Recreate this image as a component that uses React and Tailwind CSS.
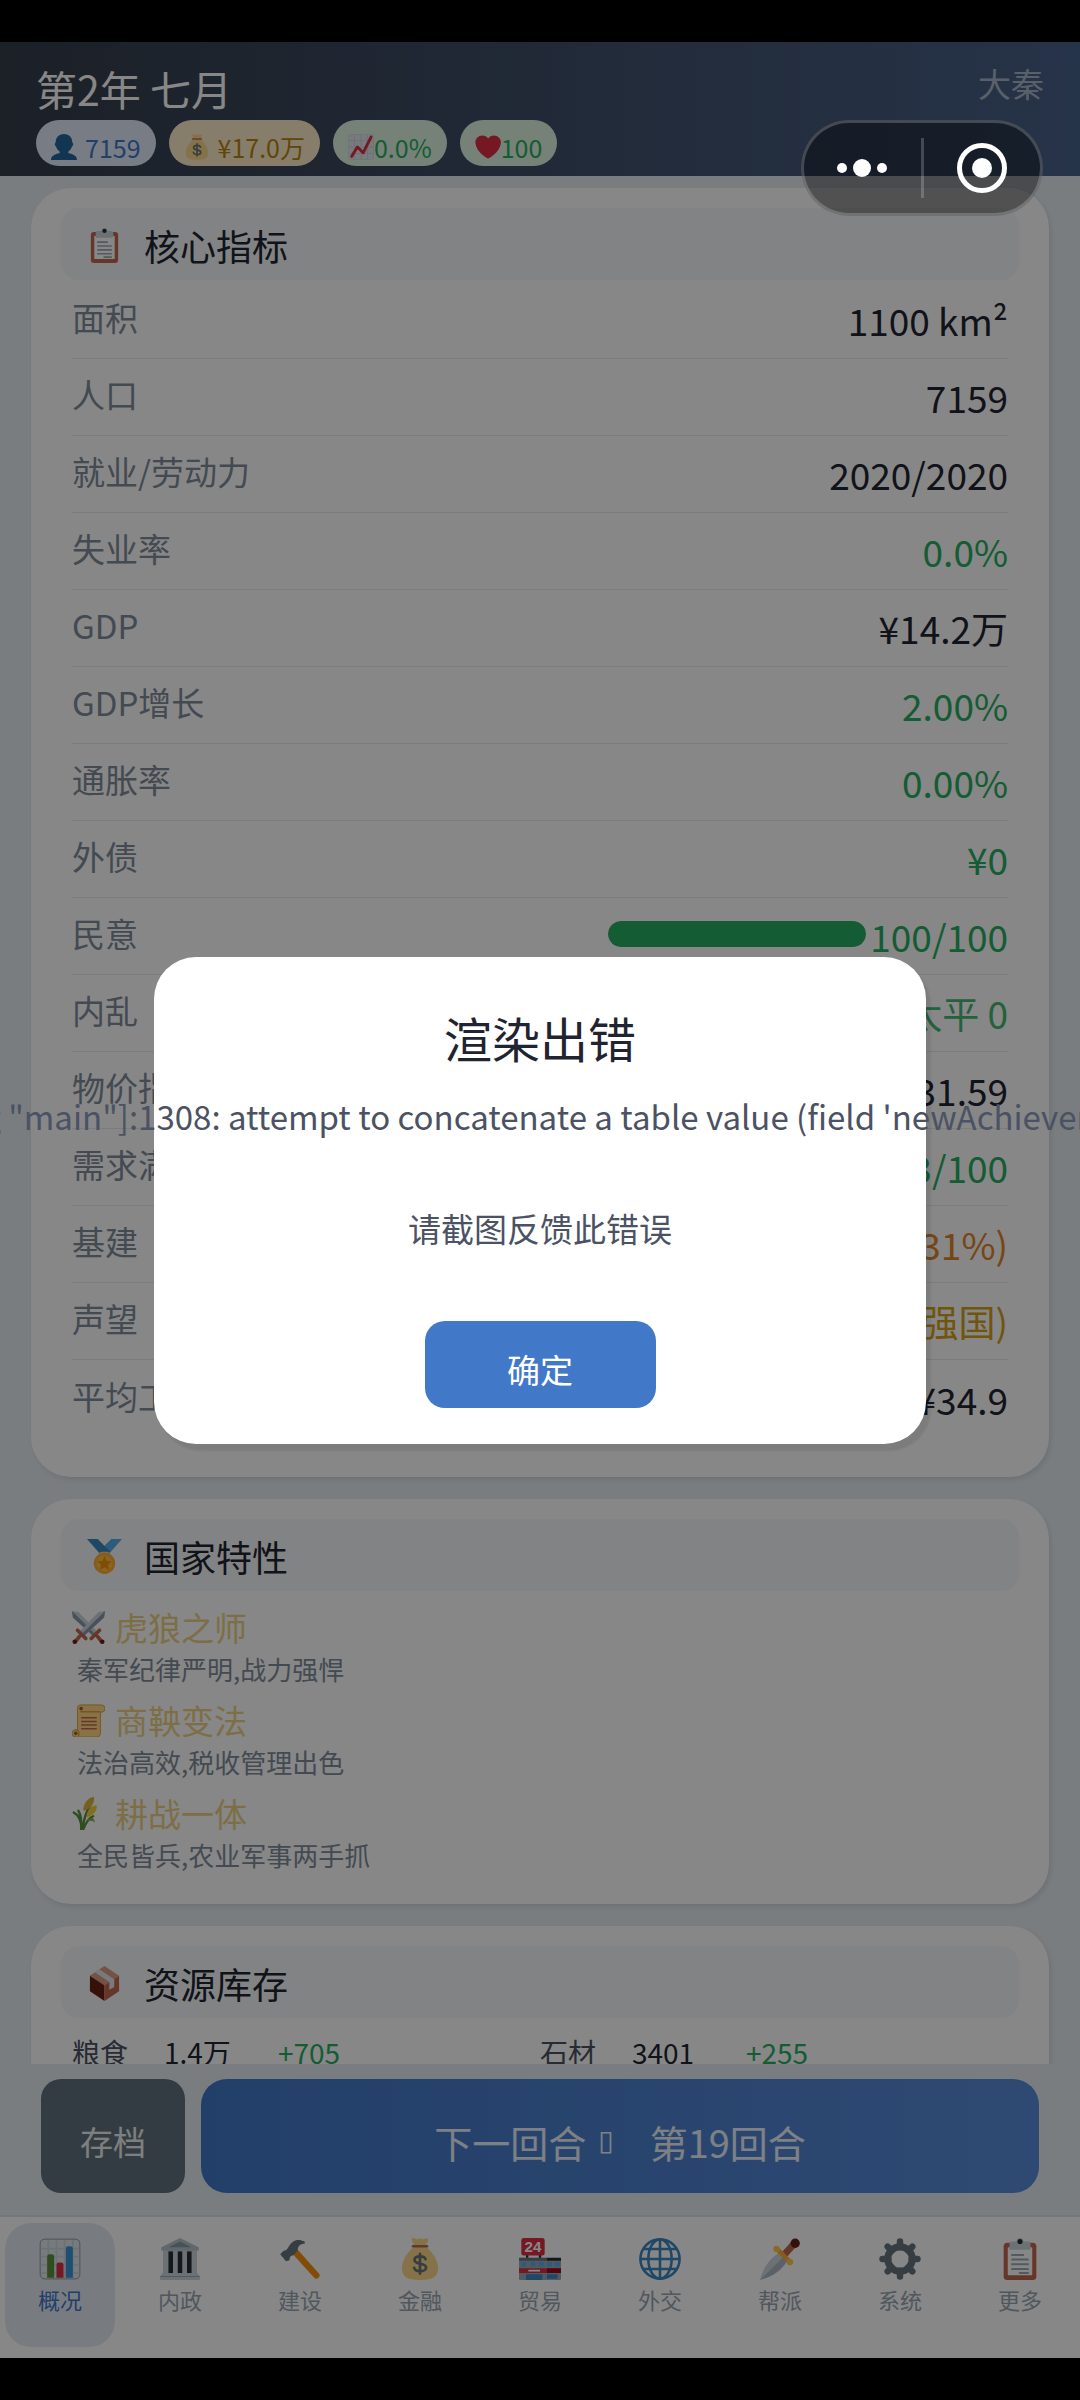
import { useState } from "react";

const ClipboardIcon = ({ className }) => (
  <svg viewBox="0 0 36 36" className={className} aria-hidden="true">
    <rect x="4" y="4" width="28" height="32" rx="3" fill="#C1694F" />
    <rect x="7.5" y="8" width="21" height="24" rx="1" fill="#FFF" />
    <path d="M25 3h-4a3 3 0 0 0-6 0h-4a2 2 0 0 0-2 2v5h18V5a2 2 0 0 0-2-2z" fill="#CCD6DD" />
    <circle cx="18" cy="3" r="2.2" fill="#292F33" />
    <path d="M10.500 14.500h11M10.500 18.500h15M10.500 22.500h15M10.500 26.500h15M17 30h8.500" stroke="#99AAB5" strokeWidth="1.700" />
  </svg>
);

const PersonIcon = ({ className }) => (
  <svg viewBox="0 0 36 36" className={className} aria-hidden="true">
    <path
      d="M24 26.800v-2.700c2.600-1.600 4.400-4.300 5.200-7.200.8-.2 1.500-1.300 1.500-2.600 0-1.200-.5-2.200-1.200-2.500C29.500 5 25.500 0 18 0S6.500 5 6.500 11.800c-.7.300-1.200 1.300-1.200 2.500 0 1.300.7 2.400 1.500 2.600.8 2.900 2.600 5.600 5.200 7.200v2.700C5 28 0 30.500 0 36h36c0-5.500-5-8-12-9.200z"
      fill="#226699"
    />
  </svg>
);

const MoneyBagIcon = ({ className }) => (
  <svg viewBox="0 0 36 36" className={className} aria-hidden="true">
    <path
      d="M23 7.500H13C8 11 2.500 19 2.500 26c0 7 4 10 15.500 10s15.500-3 15.500-10c0-7-5.500-15-10.500-18.500z"
      fill="#FDD888"
    />
    <path d="M11 1.500c0-2 2-1.500 3.500-.7C16 1.500 16.500.5 18 .5s2 1 3.500.3C23 0 25 0 25 1.500c0 2-1.500 3-2 5H13c-.5-2-2-3-2-5z" fill="#FDD888" />
    <path d="M12 7h12" stroke="#BF6952" strokeWidth="2.200" strokeLinecap="round" />
    <path
      d="M18 13.500v17M22.800 18.200c-.5-1.600-2.300-2.500-4.700-2.500-2.800 0-4.800 1.200-4.800 3.200 0 4.300 9.900 2 9.900 6.300 0 2-2.100 3.300-5 3.300s-4.700-1-5.200-3"
      fill="none"
      stroke="#67757F"
      strokeWidth="2.300"
      strokeLinecap="round"
    />
  </svg>
);

const TrendIcon = ({ className }) => (
  <svg viewBox="0 0 36 36" className={className} aria-hidden="true">
    <rect x=".5" y=".5" width="35" height="35" rx="4" fill="#E1E8ED" stroke="#CCD6DD" />
    <path d="M9 1v34M18 1v34M27 1v34M1 9h34M1 18h34M1 27h34" stroke="#CCD6DD" strokeWidth="1.500" />
    <path d="M5 31l8-13 8 8L32 4" fill="none" stroke="#DD2E44" strokeWidth="4" strokeLinecap="round" strokeLinejoin="round" />
  </svg>
);

const HeartIcon = ({ className }) => (
  <svg viewBox="0 0 36 36" className={className} aria-hidden="true">
    <path
      d="M35.900 11.800c0-5.300-4.300-9.700-9.700-9.700-3.300 0-6.200 1.700-8 4.200-1.700-2.500-4.600-4.200-8-4.200-5.300 0-9.700 4.300-9.700 9.700 0 .8.100 1.500.3 2.200C2.200 23.500 12.600 32 18.200 34c5.500-2 15.900-10.500 17.400-20 .2-.7.300-1.500.3-2.200z"
      fill="#DD2E44"
    />
  </svg>
);

const MedalIcon = ({ className }) => (
  <svg viewBox="0 0 36 36" className={className} aria-hidden="true">
    <path d="M25 0l-8 8-2 4 7 4L36 0z" fill="#55ACEE" />
    <path d="M11 0h-11l14 16h6l4-3z" fill="#3B88C3" />
    <rect x="13" y="13" width="10" height="4" rx="2" fill="#FFD983" />
    <circle cx="18" cy="25" r="11" fill="#FFAC33" />
    <circle cx="18" cy="25" r="8.300" fill="#FFCC4D" opacity=".6" />
    <path d="M18 17.500l2.200 5 5.300.5-4 3.500 1.200 5.300L18 29l-4.700 2.800 1.200-5.300-4-3.500 5.300-.5z" fill="#F4900C" />
  </svg>
);

const SwordsIcon = ({ className }) => (
  <svg viewBox="0 0 36 36" className={className} aria-hidden="true">
    <path d="M0 0l7 1 22 23-5 4L1 7z" fill="#CCD6DD" />
    <path d="M0 0l26 26-2 2L1 7z" fill="#8899A6" />
    <path d="M36 0l-7 1L7 24l5 4L35 7z" fill="#CCD6DD" />
    <path d="M36 0L10 26l2 2L35 7z" fill="#8899A6" />
    <path d="M21 30l9-9M28 28l4 5M15 30L6 21M8 28l-4 5" stroke="#C1694F" strokeWidth="4" strokeLinecap="round" />
    <circle cx="3" cy="33.500" r="2.500" fill="#662113" />
    <circle cx="33" cy="33.500" r="2.500" fill="#662113" />
  </svg>
);

const ScrollIcon = ({ className }) => (
  <svg viewBox="0 0 36 36" className={className} aria-hidden="true">
    <path d="M9 1h23a4 4 0 0 1 0 8h-1v23a4 4 0 0 1-4 4H4a4 4 0 1 1 0-8h2V4a3 3 0 0 1 3-3z" fill="#FFD983" stroke="#E39F3D" />
    <path d="M9 8.500h22M4 28.500c4 0 4 3.500 3 6.500" fill="none" stroke="#E39F3D" strokeWidth="1.500" />
    <circle cx="10" cy="5" r="2" fill="#99623A" />
    <circle cx="4" cy="32" r="2" fill="#99623A" />
    <path d="M10 15h17M10 19h17M10 23h17M10 27h17" stroke="#C1694F" strokeWidth="1.700" />
  </svg>
);

const GrainIcon = ({ className }) => (
  <svg viewBox="0 0 36 36" className={className} aria-hidden="true">
    <path d="M11 36c-1-10-4-17-9-19M11 36C13 24 15 16 20 9M12 36c3-8 6-13 11-15M10 35C10 24 10 20 7 15" fill="none" stroke="#5C913B" strokeWidth="2.600" strokeLinecap="round" />
    <path d="M12 14C13 6 18 0 24 0c1 6-3 12-10 15z" fill="#D8B83B" />
    <path d="M16 20c1-7 6-11 11-11 1 6-4 11-10 13z" fill="#F4D23C" />
    <path d="M17 25c4-3 7-3 8 3-3-3-6-2-8-1z" fill="#77B255" />
  </svg>
);

const BoxIcon = ({ className }) => (
  <svg viewBox="0 0 36 36" className={className} aria-hidden="true">
    <path d="M3 10v16l15 10V19z" fill="#662113" />
    <path d="M33 10v16L18 36V19z" fill="#C1694F" />
    <path d="M18 0L3 10l15 10 15-10z" fill="#D99E82" />
    <path d="M8 6.500l15 10v8l5-3v-8L13 3.500z" fill="#E6E7E8" />
  </svg>
);

const ChartIcon = ({ className }) => (
  <svg viewBox="0 0 36 36" className={className} aria-hidden="true">
    <rect x="1" y="1" width="34" height="34" rx="4" fill="#E1E8ED" stroke="#99AAB5" />
    <path d="M8 2v32M15 2v32M22 2v32M29 2v32M2 9h32M2 16h32M2 23h32M2 30h32" stroke="#CCD6DD" strokeWidth="1.500" />
    <path d="M7 34V16a2 2 0 0 1 2-2h2a2 2 0 0 1 2 2v18z" fill="#5C913B" />
    <path d="M15 34V23a2 2 0 0 1 2-2h2a2 2 0 0 1 2 2v11z" fill="#DD2E44" />
    <path d="M23 34V9a2 2 0 0 1 2-2h2a2 2 0 0 1 2 2v25z" fill="#3B94D9" />
  </svg>
);

const BuildingIcon = ({ className }) => (
  <svg viewBox="0 0 36 36" className={className} aria-hidden="true">
    <path d="M4 11h28v20H4z" fill="#66757F" />
    <path d="M8 12h4v18H8zM16 12h4v18h-4zM24 12h4v18h-4z" fill="#292F33" />
    <path d="M4 11h4v19H4zM12 11h4v19h-4zM20 11h4v19h-4zM28 11h4v19h-4z" fill="#CCD6DD" />
    <path d="M18 0L2 8v3h32V8z" fill="#B8C5CD" />
    <path d="M18 3L8 8h20z" fill="#8899A6" />
    <path d="M3 30h30l2 3v3H1v-3z" fill="#CCD6DD" />
    <path d="M1 33h34" stroke="#99AAB5" />
  </svg>
);

const HammerIcon = ({ className }) => (
  <svg viewBox="0 0 36 36" className={className} aria-hidden="true">
    <path d="M14 12l18 20" stroke="#F4900C" strokeWidth="5.500" strokeLinecap="round" />
    <path d="M22 3C16 0 11 2 8 8c-1 2-2 3-4 3l-3 3 5 6 3-1c0-3 1-4 3-4l4-4c0-4 2-6 6-6z" fill="#66757F" />
  </svg>
);

const StoreIcon = ({ className }) => (
  <svg viewBox="0 0 36 36" className={className} aria-hidden="true">
    <path d="M6 13h2v5H6zM17 13h2v5h-2z" fill="#292F33" />
    <rect x="0" y="17" width="36" height="19" rx="1" fill="#99AAB5" />
    <path d="M0 17h24v2.500H0z" fill="#66757F" />
    <path d="M24 17h12v2.500H24z" fill="#292F33" />
    <path d="M2 20.500h4v4H2zM10 20.500h4v4h-4zM17 20.500h4v4h-4zM24 20.500h4v4h-4zM31 20.500h4v4h-4z" fill="#55ACEE" />
    <path d="M0 26h36v4H0z" fill="#DD2E44" />
    <path d="M24 26h12v4H24z" fill="#A0041E" />
    <path d="M8 28h10" stroke="#FFF" strokeWidth="1.500" />
    <path d="M6 31h14v5H6zM24 31h9v4h-9z" fill="#3B88C3" />
    <rect x="2" y="0" width="20" height="15" rx="2" fill="#DD2E44" />
    <text x="12" y="12" fontSize="13" fontWeight="700" textAnchor="middle" fill="#FFF" fontFamily="Liberation Sans, sans-serif">
      24
    </text>
  </svg>
);

const GlobeIcon = ({ className }) => (
  <svg viewBox="0 0 36 36" className={className} aria-hidden="true">
    <g fill="none" stroke="#3B88C3" strokeWidth="2.200">
      <circle cx="18" cy="18" r="16.800" />
      <ellipse cx="18" cy="18" rx="10" ry="16.800" />
      <path d="M18 1v34M1 18h34M4 9.500h28M4 26.500h28" />
    </g>
  </svg>
);

const DaggerIcon = ({ className }) => (
  <svg viewBox="0 0 36 36" className={className} aria-hidden="true">
    <path d="M17 13l7 7c-5 8-12 13-23 16C4 26 8 19 17 13z" fill="#AAB8C2" />
    <path d="M21 16L1 36C4 26 8 19 17 13z" fill="#CCD6DD" />
    <path d="M21 15l10-11" stroke="#BF6952" strokeWidth="6" />
    <circle cx="31" cy="4.500" r="4" fill="#662113" />
    <path d="M16 10l10 10" stroke="#FFAC33" strokeWidth="4" />
    <circle cx="15" cy="9.500" r="2.800" fill="#FFCC4D" />
    <circle cx="26.500" cy="20.500" r="2.800" fill="#FFCC4D" />
  </svg>
);

const GearIcon = ({ className }) => (
  <svg viewBox="0 0 36 36" className={className} aria-hidden="true">
    <circle cx="18" cy="18" r="10.500" fill="none" stroke="#66757F" strokeWidth="6" />
    <path
      d="M18 3v5M18 28v5M3 18h5M28 18h5M7.400 7.400l3.500 3.500M25.100 25.100l3.500 3.500M7.400 28.600l3.500-3.500M25.100 10.900l3.500-3.500"
      stroke="#66757F"
      strokeWidth="5.500"
      strokeLinecap="round"
    />
  </svg>
);

const pills = [
  { id: "population", icon: PersonIcon, text: "7159", box: "gap-2 bg-[#e3ebfc] text-[#4178c8]" },
  { id: "money", icon: MoneyBagIcon, text: "¥17.0万", box: "gap-2 bg-[#feedcb] text-[#b8860b]" },
  { id: "growth", icon: TrendIcon, text: "0.0%", box: "bg-[#dff5e3] text-[#27ae60]" },
  { id: "support", icon: HeartIcon, text: "100", box: "bg-[#dff5e3] text-[#27ae60]" },
];

const metrics = [
  { label: "面积", value: "1100 km²", color: "text-[#1f2430]" },
  { label: "人口", value: "7159", color: "text-[#1f2430]" },
  { label: "就业/劳动力", value: "2020/2020", color: "text-[#1f2430]" },
  { label: "失业率", value: "0.0%", color: "text-[#27ae60]" },
  { label: "GDP", value: "¥14.2万", color: "text-[#1f2430]" },
  { label: "GDP增长", value: "2.00%", color: "text-[#27ae60]" },
  { label: "通胀率", value: "0.00%", color: "text-[#27ae60]" },
  { label: "外债", value: "¥0", color: "text-[#27ae60]" },
  { label: "民意", value: "100/100", color: "text-[#27ae60]", percent: 100 },
  { label: "内乱", value: "太平 0", color: "text-[#45b872]" },
  { label: "物价指数", value: "131.59", color: "text-[#1f2430]" },
  { label: "需求满足", value: "83/100", color: "text-[#27ae60]" },
  { label: "基建", value: "(31%)", color: "text-[#e08428]" },
  { label: "声望", value: "(强国)", color: "text-[#d4a017]" },
  { label: "平均工资", value: "¥34.9", color: "text-[#1f2430]" },
];

const traits = [
  { icon: SwordsIcon, name: "虎狼之师", desc: "秦军纪律严明,战力强悍" },
  { icon: ScrollIcon, name: "商鞅变法", desc: "法治高效,税收管理出色" },
  { icon: GrainIcon, name: "耕战一体", desc: "全民皆兵,农业军事两手抓" },
];

const resources = [
  { name: "粮食", amount: "1.4万", change: "+705" },
  { name: "石材", amount: "3401", change: "+255" },
];

const tabs = [
  { id: "overview", label: "概况", icon: ChartIcon },
  { id: "internal", label: "内政", icon: BuildingIcon },
  { id: "build", label: "建设", icon: HammerIcon },
  { id: "finance", label: "金融", icon: MoneyBagIcon },
  { id: "trade", label: "贸易", icon: StoreIcon },
  { id: "diplomacy", label: "外交", icon: GlobeIcon },
  { id: "gang", label: "帮派", icon: DaggerIcon },
  { id: "system", label: "系统", icon: GearIcon },
  { id: "more", label: "更多", icon: ClipboardIcon },
];

const errorMessage =
  "[string \"main\"]:1308: attempt to concatenate a table value (field 'newAchievement')\n\n请截图反馈此错误";

function Card({ icon: Icon, title, children }) {
  return (
    <section className="shrink-0 rounded-[40px] bg-white px-[30px] pt-5 shadow-[2px_3px_5px_rgba(40,60,80,0.12)]">
      <h2 className="flex h-[72px] items-center gap-[22px] rounded-[18px] bg-[#f5f8fa] px-[26px] pt-0.5 text-[36px] leading-[52px] text-[#1f2430]">
        <Icon className="size-[35px]" />
        {title}
      </h2>
      <div className="px-[11px]">{children}</div>
    </section>
  );
}

function ErrorDialog({ onClose }) {
  return (
    <div className="absolute inset-0 flex items-center justify-center overflow-hidden bg-black/47">
      <div
        role="alertdialog"
        aria-labelledby="error-title"
        className="flex w-[772px] flex-col items-center rounded-[42px] bg-white pt-12 pb-9 shadow-[5px_7px_2px_rgba(0,0,0,0.08)]"
      >
        <h1 id="error-title" className="text-[48px] leading-[64px] text-[#1f2430]">
          渲染出错
        </h1>
        <p className="mt-[19px] text-center text-[33px] leading-[56px] whitespace-pre text-[#4a5263]">{errorMessage}</p>
        <button
          type="button"
          onClick={onClose}
          className="mt-[65px] h-[87px] w-[231px] rounded-[20px] bg-[#4178c8] pt-3 text-[33px] text-white"
        >
          确定
        </button>
      </div>
    </div>
  );
}

function App() {
  const [activeTab, setActiveTab] = useState("overview");
  const [showError, setShowError] = useState(true);

  return (
    <div className="h-screen bg-black py-[42px] font-['Noto_Sans_CJK_SC','Noto_Sans',sans-serif]">
      <div className="relative flex h-full flex-col bg-[#e6edf2]">
        <header className="flex shrink-0 items-start justify-between bg-linear-to-r from-[#353d4a] to-[#49628a] px-9 pt-[17px] pb-[10px]">
          <div>
            <div className="mb-[3px] text-[41px] leading-[58px] text-white">第2年 七月</div>
            <div className="flex gap-[13px]">
              {pills.map(({ id, icon: Icon, text, box }) => (
                <span key={id} className={`flex h-[46px] items-center rounded-full px-[15px] pt-2 text-[25px] leading-[38px] ${box}`}>
                  <Icon className="size-[26px]" />
                  {text}
                </span>
              ))}
            </div>
          </div>
          <div className="text-[33px] leading-[48px] text-[#a9b6c8]">大秦</div>
        </header>

        <main className="flex min-h-0 flex-1 flex-col gap-[22px] overflow-hidden px-[31px] pt-3">
          <Card icon={ClipboardIcon} title="核心指标">
            <dl className="divide-y divide-[#e6eaef] pt-0.5 pb-10">
              {metrics.map((m) => (
                <div key={m.label} className="flex h-[77px] items-center justify-between">
                  <dt className="pb-1.5 text-[33px] leading-[48px] text-[#7f8c9b]">{m.label}</dt>
                  <dd className={`flex items-center gap-1 text-[37px] leading-[54px] ${m.color}`}>
                    {m.percent && (
                      <span className="mb-1 h-[26px] w-[258px] overflow-hidden rounded-full bg-[#e2e8f0]">
                        <span className="block h-full rounded-full bg-[#27ae60]" style={{ width: `${m.percent}%` }} />
                      </span>
                    )}
                    {m.value}
                  </dd>
                </div>
              ))}
            </dl>
          </Card>

          <Card icon={MedalIcon} title="国家特性">
            <ul className="flex flex-col gap-[9px] pt-[13px] pb-[30px]">
              {traits.map(({ icon: Icon, name, desc }) => (
                <li key={name}>
                  <div className="flex items-center gap-[10px] text-[33px] leading-[46px] text-[#ecd085]">
                    <Icon className="size-[33px]" />
                    {name}
                  </div>
                  <p className="pl-[5px] text-[26px] leading-[38px] text-[#7f8c9b]">{desc}</p>
                </li>
              ))}
            </ul>
          </Card>

          <Card icon={BoxIcon} title="资源库存">
            <ul className="grid grid-cols-2 pt-3 pb-8 text-[28px] leading-[44px]">
              {resources.map((r) => (
                <li key={r.name} className="flex">
                  <span className="w-[92px] text-[#4a5263]">{r.name}</span>
                  <span className="w-[114px] text-[#1f2430]">{r.amount}</span>
                  <span className="text-[#27ae60]">{r.change}</span>
                </li>
              ))}
            </ul>
          </Card>
        </main>

        <div className="flex shrink-0 gap-4 px-[41px] pt-[15px] pb-[22px]">
          <button type="button" className="h-[114px] w-[144px] rounded-[20px] bg-[#62727f] pt-3 text-[33px] text-white/90">
            存档
          </button>
          <button
            type="button"
            className="flex h-[114px] flex-1 items-center justify-center rounded-[26px] bg-linear-to-r from-[#4178c8] to-[#588bd8] pt-2.5 text-[38px] text-white/90"
          >
            下一回合
            <span className="ml-3 font-['DejaVu_Sans'] text-[28px]">▯</span>
            <span className="ml-9">第19回合</span>
          </button>
        </div>

        <nav className="grid shrink-0 grid-cols-9 border-t-2 border-[#d8e0e7] bg-white pt-1.5 pb-[11px]">
          {tabs.map(({ id, label, icon: Icon }) => (
            <button
              key={id}
              type="button"
              onClick={() => setActiveTab(id)}
              className={
                activeTab === id
                  ? "mx-[5px] flex h-[124px] flex-col items-center rounded-[26px] bg-[#e3ebf4] pt-[15px] text-[22px] leading-8 text-[#4178c8]"
                  : "mx-[5px] flex h-[124px] flex-col items-center rounded-[26px] pt-[15px] text-[22px] leading-8 text-[#98a4b0]"
              }
            >
              <Icon className="mb-[3px] size-[42px]" />
              {label}
            </button>
          ))}
        </nav>

        {showError && <ErrorDialog onClose={() => setShowError(false)} />}

        <div className="absolute top-[78px] right-[37px] flex h-24 w-[242px] items-center rounded-full border-3 border-white/20 bg-black/40">
          <button type="button" aria-label="菜单" className="flex flex-1 items-center justify-center gap-1.5">
            <span className="size-[10px] rounded-full bg-white" />
            <span className="size-[18px] rounded-full bg-white" />
            <span className="size-[10px] rounded-full bg-white" />
          </button>
          <span className="h-[60px] w-[3px] bg-white/20" />
          <button type="button" aria-label="关闭" className="flex flex-1 items-center justify-center">
            <span className="flex size-[50px] items-center justify-center rounded-full border-5 border-white">
              <span className="size-5 rounded-full bg-white" />
            </span>
          </button>
        </div>
      </div>
    </div>
  );
}

export default App;
